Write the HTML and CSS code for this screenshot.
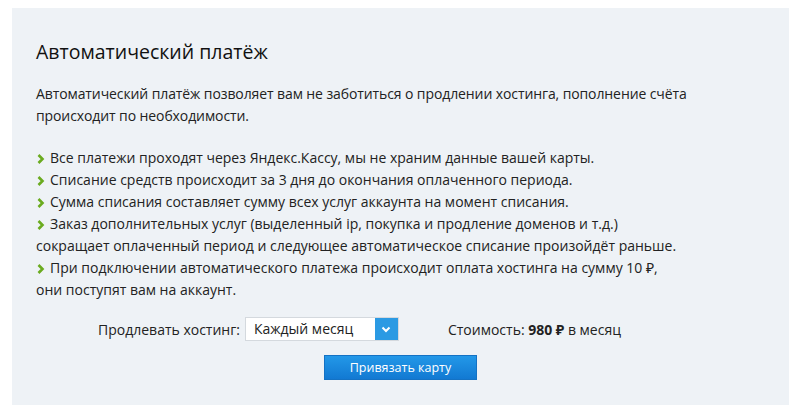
FILE: index.html
```html
<!DOCTYPE html>
<html lang="ru">
<head>
<meta charset="utf-8">
<link rel="stylesheet" href="styles.css">
</head>
<body>
<div class="panel">
  <h2 class="title">Автоматический платёж</h2>
  <p class="intro">Автоматический платёж позволяет вам не заботиться о продлении хостинга, пополнение счёта происходит по необходимости.</p>
  <ul class="list">
    <li><svg class="chev" width="8" height="10" viewBox="0 0 8 10"><path d="M1.5 1 L5.5 5 L1.5 9" fill="none" stroke="#6aab1f" stroke-width="2.6"/></svg>Все платежи проходят через Яндекс.Кассу, мы не храним данные вашей карты.</li>
    <li><svg class="chev" width="8" height="10" viewBox="0 0 8 10"><path d="M1.5 1 L5.5 5 L1.5 9" fill="none" stroke="#6aab1f" stroke-width="2.6"/></svg>Списание средств происходит за 3 дня до окончания оплаченного периода.</li>
    <li><svg class="chev" width="8" height="10" viewBox="0 0 8 10"><path d="M1.5 1 L5.5 5 L1.5 9" fill="none" stroke="#6aab1f" stroke-width="2.6"/></svg>Сумма списания составляет сумму всех услуг аккаунта на момент списания.</li>
    <li><svg class="chev" width="8" height="10" viewBox="0 0 8 10"><path d="M1.5 1 L5.5 5 L1.5 9" fill="none" stroke="#6aab1f" stroke-width="2.6"/></svg>Заказ дополнительных услуг (выделенный ip, покупка и продление доменов и т.д.)<br>сокращает оплаченный период и следующее автоматическое списание произойдёт раньше.</li>
    <li><svg class="chev" width="8" height="10" viewBox="0 0 8 10"><path d="M1.5 1 L5.5 5 L1.5 9" fill="none" stroke="#6aab1f" stroke-width="2.6"/></svg>При подключении автоматического платежа происходит оплата хостинга на сумму 10 ₽,<br>они поступят вам на аккаунт.</li>
  </ul>
  <div class="form-row">
    <span class="label">Продлевать хостинг:</span>
    <div class="select">
      <span class="select-text">Каждый месяц</span>
      <span class="select-btn"><svg width="10" height="7" viewBox="0 0 10 7"><path d="M1.5 1.5 L5 5 L8.5 1.5" fill="none" stroke="#fff" stroke-width="2"/></svg></span>
    </div>
    <span class="cost">Стоимость: <b>980 ₽</b> в месяц</span>
  </div>
  <div class="btn-row">
    <button class="btn">Привязать карту</button>
  </div>
</div>
</body>
</html>
```
FILE: styles.css
```css
html, body { margin: 0; padding: 0; background: #fff; }
body {
  padding: 8px 11px 0 12px;
  font-family: "Open Sans", "Noto Sans", sans-serif;
  color: #222;
}
.panel {
  background: #eef2f6;
  height: 397px;
  box-sizing: border-box;
  padding: 31px 24px 0 24px;
}
.title {
  margin: 0;
  font-weight: 400;
  font-size: 19.5px;
  line-height: 26px;
  color: #111;
}
.intro {
  margin: 18px 0 0;
  font-size: 14px;
  line-height: 22px;
  letter-spacing: -0.1px;
}
.list {
  list-style: none;
  margin: 20px 0 0;
  padding: 0;
  font-size: 14px;
  line-height: 22px;
}
.chev {
  margin: 0 5px 0 1px;
  vertical-align: -1px;
}
.form-row {
  display: flex;
  align-items: center;
  margin: 16px 0 0 62px;
  font-size: 14px;
}
.label { margin-right: 5px; }
.select {
  display: flex;
  width: 154px;
  height: 24px;
  box-sizing: border-box;
  border: 1px solid #d4d9de;
  background: #fff;
}
.select-text {
  flex: 1;
  padding-left: 8px;
  line-height: 22px;
}
.select-btn {
  width: 23px;
  background: #2b9ae3;
  display: flex;
  align-items: center;
  justify-content: center;
}
.cost { margin-left: 49px; }
.cost b { font-weight: 700; }
.btn-row {
  display: flex;
  justify-content: center;
  margin-top: 14px;
}
.btn {
  width: 153px;
  height: 25px;
  border: 1px solid #1472c4;
  background: linear-gradient(#2398e8, #1279d2);
  color: #fff;
  font-family: "Open Sans", "Noto Sans", sans-serif;
  font-size: 12.5px;
  padding: 0;
}
```
